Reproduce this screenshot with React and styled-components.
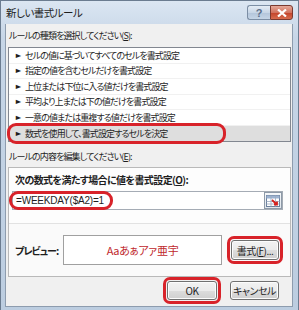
import React from "react";
import styled, { createGlobalStyle } from "styled-components";

const GlobalStyle = createGlobalStyle`
  html, body { margin: 0; padding: 0; background: #ffffff; }
  body {
    font-family: "Noto Sans CJK JP", "Liberation Sans", sans-serif;
    font-feature-settings: "palt";
  }
`;

const ruleTypes = [
  "セルの値に基づいてすべてのセルを書式設定",
  "指定の値を含むセルだけを書式設定",
  "上位または下位に入る値だけを書式設定",
  "平均より上または下の値だけを書式設定",
  "一意の値または重複する値だけを書式設定",
  "数式を使用して、書式設定するセルを決定",
];

const App = () => {
  return (
    <>
      <GlobalStyle />
      <Window>
        <TitleBar>
          <Title>新しい書式ルール</Title>
          <CaptionButtons>
            <HelpButton>?</HelpButton>
            <CloseButton>
              <svg width="10" height="8" viewBox="0 0 10 8">
                <path d="M1 0.5 L9 7.5 M9 0.5 L1 7.5" stroke="#fff" strokeWidth="2.2" />
              </svg>
            </CloseButton>
          </CaptionButtons>
        </TitleBar>

        <Body>
          <Label $top={5}>
            ルールの種類を選択してください(<u>S</u>):
          </Label>
          <List>
            {ruleTypes.map((text, i) => (
              <Row key={i} $selected={i === 5}>
                <Bullet>►</Bullet>
                {text}
                {i === 5 && <RowMark />}
              </Row>
            ))}
          </List>

          <Label $top={8}>
            ルールの内容を編集してください(<u>E</u>):
          </Label>
          <Panel>
            <Upper>
              <BoldLabel>
                次の数式を満たす場合に値を書式設定(<u>O</u>):
              </BoldLabel>
              <FormulaBox>
                <Formula>
                  =WEEKDAY($A2)=1
                  <FormulaMark />
                </Formula>
                <RefButton>
                  <svg width="14" height="12" viewBox="0 0 14 12">
                    <rect x="0.5" y="0.5" width="13" height="11" fill="#ffffff" stroke="#6a7f9c" />
                    <rect x="0.5" y="0.5" width="13" height="3" fill="#9db3d1" />
                    <path d="M0.5 6.5 H13.5 M0.5 9 H13.5 M5 0.5 V11.5 M9.5 0.5 V11.5" stroke="#9aaac0" strokeWidth="0.8" />
                    <path d="M6 5 L11 9.5 M8 9.5 H11 V6.5" stroke="#d4201e" strokeWidth="1.8" fill="none" />
                  </svg>
                </RefButton>
              </FormulaBox>
            </Upper>
            <Lower>
              <PreviewLabel>プレビュー:</PreviewLabel>
              <PreviewBox>Aaあぁアァ亜宇</PreviewBox>
              <Mark $radius={7}>
                <Button $width={48} $height={20}>
                  書式(<u>F</u>)...
                </Button>
              </Mark>
            </Lower>
          </Panel>

          <Footer>
            <Mark $radius={7}>
              <Button $width={50} $height={19}>OK</Button>
            </Mark>
            <Button $width={49} $height={19}>キャンセル</Button>
          </Footer>
        </Body>
      </Window>
    </>
  );
};

const uiText = `
  font-size: 9px;
  letter-spacing: -0.9px;
  color: #1e1e1e;
  white-space: nowrap;
`;

const Window = styled.div`
  width: 299px;
  height: 310px;
  box-sizing: border-box;
  border: 1px solid #6b7c90;
  border-bottom: none;
  background: linear-gradient(180deg, #dbe6f2 0%, #c7d6e7 12%, #bccde0 100%);
  display: flex;
  flex-direction: column;
  padding: 0 5px 3px 4px;
`;

const TitleBar = styled.div`
  height: 23px;
  display: flex;
  align-items: center;
  justify-content: space-between;
`;

const Title = styled.div`
  font-size: 10.5px;
  letter-spacing: -0.5px;
  color: #1e1e1e;
  padding-left: 1px;
  margin-top: -1px;
`;

const CaptionButtons = styled.div`
  display: flex;
  align-self: flex-start;
  margin-top: 4px;
`;

const HelpButton = styled.div`
  width: 23px;
  height: 15px;
  box-sizing: border-box;
  border: 1px solid #7c8ea4;
  border-right: none;
  border-radius: 3px 0 0 3px;
  background: linear-gradient(180deg, #e4ecf5 0%, #c8d6e6 50%, #b3c5da 51%, #c5d5e6 100%);
  color: #5b6f89;
  font-family: "Liberation Sans", sans-serif;
  font-weight: bold;
  font-size: 11px;
  display: flex;
  align-items: center;
  justify-content: center;
`;

const CloseButton = styled.div`
  width: 23px;
  height: 15px;
  box-sizing: border-box;
  border: 1px solid #7a3a30;
  border-radius: 0 3px 3px 0;
  background: linear-gradient(180deg, #e6a99a 0%, #d2735f 50%, #c2422a 51%, #d76c4e 100%);
  display: flex;
  align-items: center;
  justify-content: center;
`;

const Body = styled.div`
  flex: 1;
  background: #f0f0f0;
  border: 1px solid #8d9cae;
  border-top: none;
  padding: 0 1px 0 2px;
  display: flex;
  flex-direction: column;
`;

const Label = styled.div`
  ${uiText}
  margin-top: ${(p) => p.$top}px;
  height: 14px;
  line-height: 14px;
  padding-left: 1px;
  u { text-decoration-thickness: 1px; text-underline-offset: 1px; }
`;

const List = styled.div`
  margin-top: 4px;
  background: #ffffff;
  border: 1px solid #828790;
  height: 95px;
  box-sizing: border-box;
  display: flex;
  flex-direction: column;
`;

const Row = styled.div`
  ${uiText}
  position: relative;
  height: 15.5px;
  flex: none;
  box-sizing: border-box;
  display: flex;
  align-items: center;
  border-bottom: ${(p) => (p.$selected ? "none" : "1px solid #f1f1f1")};
  background: ${(p) => (p.$selected ? "#dedede" : "transparent")};
`;

const Bullet = styled.span`
  font-size: 9px;
  letter-spacing: 0;
  width: 16px;
  padding-left: 5px;
  box-sizing: border-box;
  transform: scaleY(0.8);
`;

const RowMark = styled.span`
  position: absolute;
  left: -2px;
  top: -3px;
  width: 219px;
  height: 21px;
  box-sizing: border-box;
  border: 3px solid #d8232a;
  border-radius: 9px;
`;

const Panel = styled.div`
  margin-top: 3px;
  height: 110px;
  box-sizing: border-box;
  border: 1px solid #b9b9b9;
  background: #fafafa;
  display: flex;
  flex-direction: column;
`;

const Upper = styled.div`
  height: 56px;
  box-sizing: border-box;
  border-bottom: 1px solid #e2e2e2;
  background: #fdfdfd;
  padding: 5px 7px 0 3px;
`;

const BoldLabel = styled.div`
  ${uiText}
  font-size: 10px;
  letter-spacing: -0.6px;
  height: 14px;
  line-height: 14px;
  font-weight: bold;
  padding-left: 3px;
`;

const FormulaBox = styled.div`
  margin-top: 4px;
  height: 19px;
  box-sizing: border-box;
  border: 1px solid #a5acb5;
  background: #ffffff;
  display: flex;
  align-items: center;
  justify-content: space-between;
`;

const Formula = styled.span`
  position: relative;
  font-family: "Liberation Sans", sans-serif;
  font-size: 10px;
  letter-spacing: -0.2px;
  color: #1e1e1e;
  padding-left: 3px;
`;

const FormulaMark = styled.span`
  position: absolute;
  left: -4px;
  right: -9px;
  top: -4px;
  bottom: -4px;
  border: 3px solid #d8232a;
  border-radius: 9px;
`;

const RefButton = styled.div`
  width: 18px;
  height: 17px;
  box-sizing: border-box;
  border: 1px solid #8e9aa8;
  background: linear-gradient(180deg, #f6f8fa, #dfe5ec);
  display: flex;
  align-items: center;
  justify-content: center;
`;

const Lower = styled.div`
  flex: 1;
  display: flex;
  align-items: center;
  padding: 0 6px;
`;

const PreviewLabel = styled.div`
  ${uiText}
  font-size: 10px;
  letter-spacing: -1px;
  width: 48px;
  font-weight: bold;
`;

const PreviewBox = styled.div`
  width: 159px;
  height: 30px;
  box-sizing: border-box;
  border: 1px solid #a0a0a0;
  background: #ffffff;
  margin-right: 5px;
  display: flex;
  align-items: center;
  justify-content: center;
  font-size: 11px;
  letter-spacing: -0.3px;
  color: #c0282d;
  white-space: nowrap;
`;

const Mark = styled.span`
  display: inline-flex;
  padding: 1px;
  border: 3px solid #d8232a;
  border-radius: ${(p) => p.$radius}px;
`;

const Button = styled.div`
  ${uiText}
  font-size: 10px;
  letter-spacing: -0.5px;
  width: ${(p) => p.$width}px;
  height: ${(p) => p.$height}px;
  box-sizing: border-box;
  border: 1px solid #707070;
  border-radius: 3px;
  background: linear-gradient(180deg, #f2f2f2 0%, #ebebeb 50%, #dddddd 51%, #cfcfcf 100%);
  box-shadow: inset 0 0 0 1px #fcfcfc;
  display: flex;
  align-items: center;
  justify-content: center;
`;

const Footer = styled.div`
  display: flex;
  justify-content: flex-end;
  align-items: center;
  gap: 9px;
  padding-right: 12px;
  height: 27px;
`;

export default App;
